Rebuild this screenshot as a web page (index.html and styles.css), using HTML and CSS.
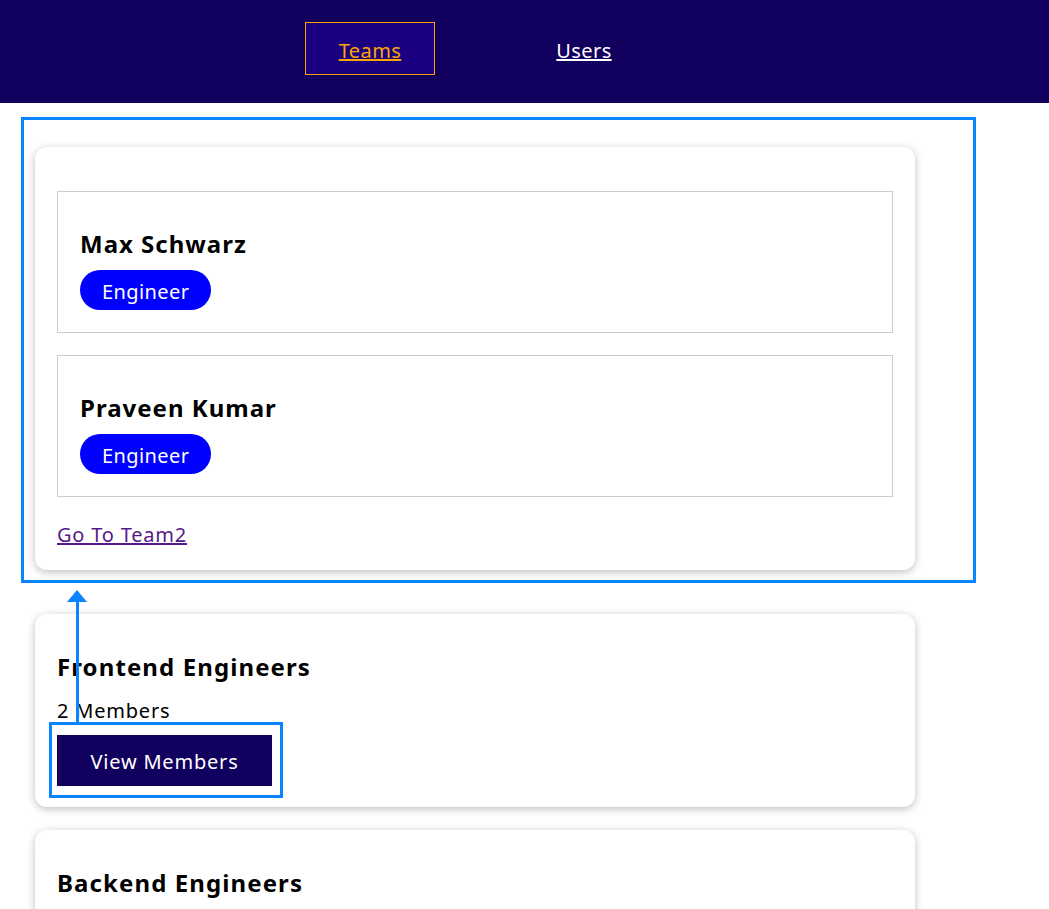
FILE: index.html
```html
<!DOCTYPE html>
<html>
<head>
<meta charset="utf-8">
<link rel="stylesheet" href="styles.css">
</head>
<body>
<header class="header">
  <nav>
    <ul class="nav-list">
      <li><a class="nav-link active" href="#">Teams</a></li>
      <li><a class="nav-link" href="#">Users</a></li>
    </ul>
  </nav>
</header>
<main class="main">
  <section class="card first">
    <ul class="members">
      <li class="member">
        <h3 class="member-name">Max Schwarz</h3>
        <span class="badge">Engineer</span>
      </li>
      <li class="member">
        <h3 class="member-name">Praveen Kumar</h3>
        <span class="badge">Engineer</span>
      </li>
    </ul>
    <a class="team-link" href="#">Go To Team2</a>
  </section>
  <section class="card">
    <h2 class="team-title">Frontend Engineers</h2>
    <p class="team-count">2 Members</p>
    <button class="view-btn">View Members</button>
  </section>
  <section class="card">
    <h2 class="team-title">Backend Engineers</h2>
  </section>
</main>
<div class="mark mark-section"></div>
<div class="mark mark-button"></div>
<div class="mark-line"></div>
<div class="mark-arrow"></div>
</body>
</html>
```
FILE: styles.css
```css
html, body {
  margin: 0;
  padding: 0;
}
body {
  font-family: "Noto Sans", "Noto Sans CJK KR", sans-serif;
  background: #ffffff;
  color: #000;
  position: relative;
  overflow: hidden;
  height: 909px;
}
.header {
  background: #12005e;
  height: 103px;
}
.nav-list {
  list-style: none;
  margin: 0;
  padding: 22px 0 0 305px;
  display: flex;
  gap: 84px;
}
.nav-link {
  display: block;
  width: 128px;
  height: 51px;
  line-height: 55px;
  text-align: center;
  font-size: 20px;
  letter-spacing: 0.4px;
  color: #ffffff;
  text-decoration: underline;
  border: 1px solid transparent;
}
.nav-link.active {
  color: #fba500;
  background: #1a0080;
  border-color: #fba500;
}
.main {
  padding: 0 0 0 35px;
}
.card {
  width: 880px;
  box-sizing: border-box;
  background: #fff;
  border-radius: 12px;
  box-shadow: 0 2px 8px rgba(0, 0, 0, 0.26);
  padding: 22px 22px 21px;
  margin-bottom: 23px;
}
.card.first {
  margin-top: 44px;
  margin-bottom: 44px;
  padding-top: 44px;
}
.members {
  list-style: none;
  margin: 0;
  padding: 0;
}
.member {
  border: 1px solid #cccccc;
  padding: 22px 22px 22px;
  margin-bottom: 22px;
}
.member:last-child {
  margin-bottom: 24px;
}
.member-name {
  margin: 13px 0 10px;
  font-size: 24px;
  line-height: 33px;
  letter-spacing: 1px;
  font-weight: bold;
}
.badge {
  display: inline-block;
  background: #0000ff;
  color: #fff;
  font-size: 20px;
  line-height: 43px;
  height: 40px;
  padding: 0 22px;
  letter-spacing: 0.4px;
  border-radius: 20px;
}
.team-link {
  display: block;
  font-size: 20px;
  line-height: 28px;
  letter-spacing: 0.8px;
  color: #551a8b;
  text-decoration: underline;
}
.team-title {
  margin: 14px 0 0;
  font-size: 24px;
  line-height: 33px;
  letter-spacing: 1.1px;
  font-weight: bold;
}
.team-count {
  margin: 14px 0 10px;
  font-size: 20px;
  line-height: 28px;
  letter-spacing: 0.8px;
}
.view-btn {
  font-family: inherit;
  font-size: 20px;
  letter-spacing: 0.8px;
  background: #12005e;
  color: #fff;
  border: none;
  width: 215px;
  height: 51px;
  padding: 2px 0 0;
}
.mark {
  position: absolute;
  border: 3px solid #0a84ff;
  box-sizing: border-box;
}
.mark-section {
  left: 21px;
  top: 117px;
  width: 955px;
  height: 466px;
}
.mark-button {
  left: 49px;
  top: 722px;
  width: 234px;
  height: 76px;
}
.mark-line {
  position: absolute;
  left: 76px;
  top: 600px;
  width: 3px;
  height: 123px;
  background: #0a84ff;
}
.mark-arrow {
  position: absolute;
  left: 67px;
  top: 590px;
  width: 0;
  height: 0;
  border-left: 10px solid transparent;
  border-right: 10px solid transparent;
  border-bottom: 12px solid #0a84ff;
}
```
